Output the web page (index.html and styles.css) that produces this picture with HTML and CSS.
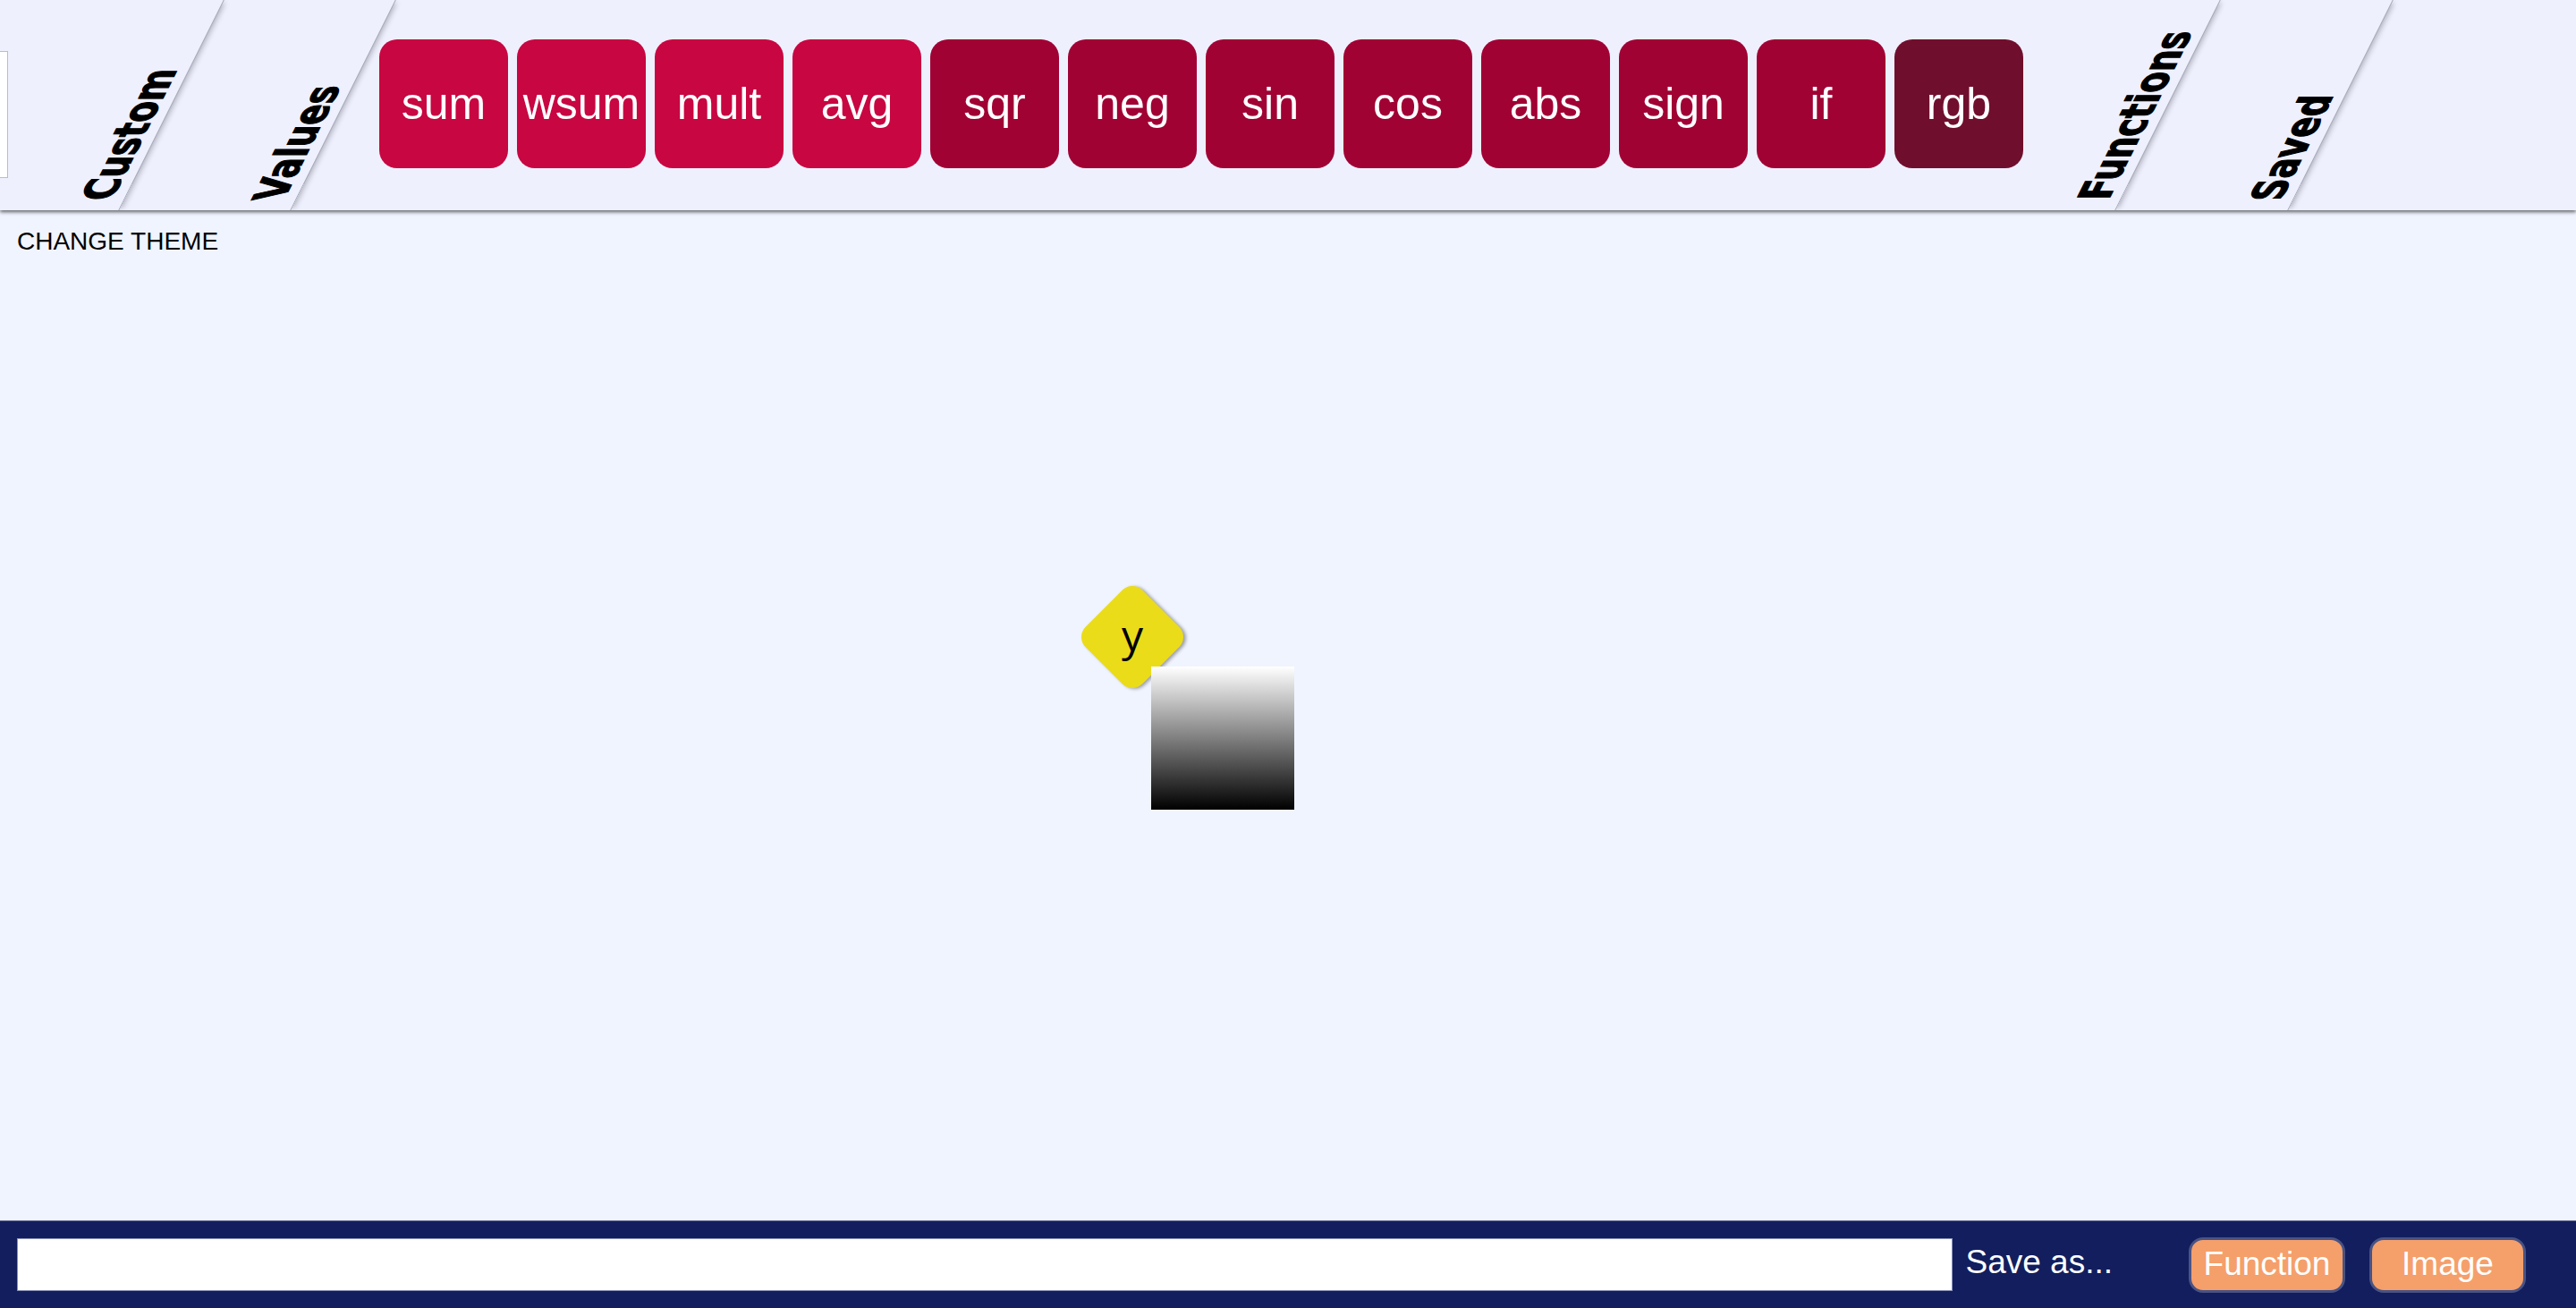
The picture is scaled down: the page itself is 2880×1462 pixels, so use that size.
FILE: index.html
```html
<!DOCTYPE html>
<html lang="en">
<head>
<meta charset="utf-8">
<title>Function Painter</title>
<link rel="stylesheet" href="styles.css">
</head>
<body>
<div class="app">
  <header class="topbar">
    <div class="stub"></div>
    <div class="tab tab-custom"><span class="tab-label">Custom</span></div>
    <div class="tab tab-values"><span class="tab-label">Values</span></div>
    <div class="palette">
      <div class="fn fn-basic">sum</div>
      <div class="fn fn-basic">wsum</div>
      <div class="fn fn-basic">mult</div>
      <div class="fn fn-basic">avg</div>
      <div class="fn fn-unary">sqr</div>
      <div class="fn fn-unary">neg</div>
      <div class="fn fn-unary">sin</div>
      <div class="fn fn-unary">cos</div>
      <div class="fn fn-unary">abs</div>
      <div class="fn fn-unary">sign</div>
      <div class="fn fn-unary">if</div>
      <div class="fn fn-color">rgb</div>
    </div>
    <div class="tab tab-functions"><span class="tab-label">Functions</span></div>
    <div class="tab tab-saved"><span class="tab-label">Saved</span></div>
  </header>
  <main class="canvas">
    <div class="theme">CHANGE THEME</div>
    <div class="node node-y">
      <div class="node-shape"></div>
      <span class="node-label">y</span>
    </div>
    <div class="preview"></div>
  </main>
  <footer class="savebar">
    <input class="save-input" type="text">
    <span class="save-label">Save as...</span>
    <button class="save-btn">Function</button>
    <button class="save-btn save-btn-image">Image</button>
  </footer>
</div>
</body>
</html>
```
FILE: styles.css
```css
html, body {
  margin: 0;
  padding: 0;
  height: 100%;
}
body {
  background: #f0f4fe;
  font-family: "Liberation Sans", Arial, sans-serif;
  overflow: hidden;
}
.app {
  display: flex;
  flex-direction: column;
  height: 1462px;
}

/* ---------- top bar ---------- */
.topbar {
  flex: 0 0 235px;
  height: 235px;
  display: flex;
  align-items: flex-start;
  background: #eef0fe;
  box-shadow: 0 2px 4px rgba(0, 0, 0, 0.6);
  position: relative;
  z-index: 2;
  overflow: hidden;
}
.stub {
  flex: 0 0 9px;
  height: 142px;
  margin-top: 57px;
  box-sizing: border-box;
  background: #fff;
  border: 1px solid #bdbdbd;
  border-left: 0;
}
.tab {
  flex: 0 0 auto;
  height: 235px;
  box-sizing: border-box;
  display: flex;
  justify-content: flex-end;
  align-items: flex-end;
  padding: 0 10px 8px 0;
  border-right: 1px solid #a4a6b6;
  box-shadow: 5px 0 6px -3px rgba(0, 0, 0, 0.28);
  transform: skewX(-26.565deg);
}
.tab-custom { width: 183px; }
.tab-values { width: 192px; }
.tab-functions { width: 162px; }
.tab-saved { width: 193px; }
.tab-label {
  writing-mode: vertical-rl;
  transform: rotate(180deg) scale(1.25, 0.96);
  font-family: "Liberation Sans Narrow", "DejaVu Sans Condensed", "DejaVu Sans", sans-serif;
  font-stretch: condensed;
  font-weight: 700;
  font-size: 40px;
  line-height: 40px;
  color: #000;
  -webkit-text-stroke: 1px #000;
  white-space: nowrap;
}

.palette {
  display: flex;
  gap: 10px;
  margin-left: 40px;
  padding-top: 44px;
  flex: 0 0 auto;
}
.fn {
  width: 144px;
  height: 144px;
  border-radius: 20px;
  display: flex;
  align-items: center;
  justify-content: center;
  color: #fff;
  font-size: 50px;
  font-family: "Liberation Sans", Arial, sans-serif;
}
.fn-basic { background: #c80641; }
.fn-unary { background: #a00234; }
.fn-color { background: #700f2d; }

/* ---------- canvas ---------- */
.canvas {
  flex: 1 1 auto;
  position: relative;
}
.theme {
  padding: 19px 0 0 19px;
  font-size: 28px;
  color: #000;
}
.node {
  position: absolute;
  left: 1209px;
  top: 420px;
  width: 114px;
  height: 114px;
}
.node-shape {
  position: absolute;
  left: 12px;
  top: 12px;
  width: 90px;
  height: 90px;
  border-radius: 16px;
  background: #ebdc1a;
  transform: rotate(45deg);
  box-shadow: 2.8px -1.4px 4px rgba(0, 0, 0, 0.35);
}
.node-label {
  position: absolute;
  inset: 0;
  display: flex;
  align-items: center;
  justify-content: center;
  padding-bottom: 4px;
  box-sizing: border-box;
  font-family: "Open Sans", "Noto Sans", sans-serif;
  font-size: 48px;
  line-height: 1;
  color: #000;
}
.preview {
  position: absolute;
  left: 1287px;
  top: 510px;
  width: 160px;
  height: 160px;
  background: linear-gradient(#ffffff, #000000);
}

/* ---------- save bar ---------- */
.savebar {
  flex: 0 0 98px;
  height: 98px;
  box-sizing: border-box;
  display: flex;
  align-items: center;
  padding: 0 56px 0 19px;
  background: #121e5e;
  border-top: 1px solid #6b7196;
}
.save-input {
  flex: 1 1 auto;
  min-width: 0;
  height: 59px;
  box-sizing: border-box;
  margin: 0;
  padding: 0 8px;
  border: 1px solid #8a90b4;
  background: #fff;
  font-size: 30px;
}
.save-label {
  margin: 0 85px 5px 14px;
  font-size: 37px;
  color: #fff;
  white-space: nowrap;
}
.save-btn {
  width: 175px;
  height: 62px;
  box-sizing: border-box;
  margin: 0;
  padding: 0 0 3px 0;
  border: 3px solid #4a5382;
  border-radius: 16px;
  background: #f59f6b;
  color: #fff;
  font-family: "Liberation Sans", Arial, sans-serif;
  font-size: 37px;
  line-height: 1;
}
.save-btn-image {
  margin-left: 27px;
}
```
